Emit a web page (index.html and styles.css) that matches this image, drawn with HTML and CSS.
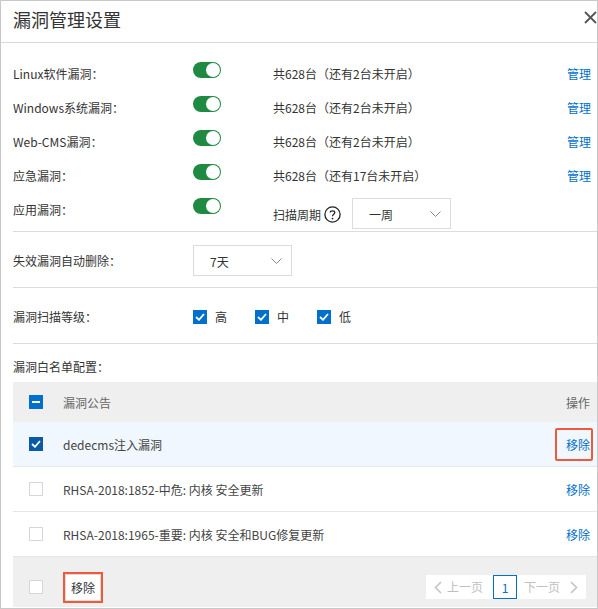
FILE: index.html
```html
<!DOCTYPE html>
<html lang="zh-CN">
<head>
<meta charset="utf-8">
<title>漏洞管理设置</title>
<link rel="stylesheet" href="styles.css">
</head>
<body>
<div class="dialog">
  <div class="header">
    <div class="title">漏洞管理设置</div>
    <svg class="close" width="13" height="13" viewBox="0 0 13 13"><path d="M1 1 L12 12 M12 1 L1 12" stroke="#555" stroke-width="1.8" fill="none"/></svg>
  </div>

  <div class="section sec-switch">
    <div class="row">
      <div class="label">Linux软件漏洞：</div>
      <div class="toggle-cell"><span class="toggle"><span class="knob"></span></span></div>
      <div class="info">共628台（还有2台未开启）</div>
      <a class="link">管理</a>
    </div>
    <div class="row">
      <div class="label">Windows系统漏洞：</div>
      <div class="toggle-cell"><span class="toggle"><span class="knob"></span></span></div>
      <div class="info">共628台（还有2台未开启）</div>
      <a class="link">管理</a>
    </div>
    <div class="row">
      <div class="label">Web-CMS漏洞：</div>
      <div class="toggle-cell"><span class="toggle"><span class="knob"></span></span></div>
      <div class="info">共628台（还有2台未开启）</div>
      <a class="link">管理</a>
    </div>
    <div class="row">
      <div class="label">应急漏洞：</div>
      <div class="toggle-cell"><span class="toggle"><span class="knob"></span></span></div>
      <div class="info">共628台（还有17台未开启）</div>
      <a class="link">管理</a>
    </div>
    <div class="row row-last">
      <div class="label">应用漏洞：</div>
      <div class="toggle-cell"><span class="toggle"><span class="knob"></span></span></div>
      <div class="period">
        <span class="period-text">扫描周期</span>
        <svg class="help" width="17" height="17" viewBox="0 0 17 17"><circle cx="8.5" cy="8.5" r="7.6" fill="none" stroke="#222" stroke-width="1.3"/><path d="M6.2 6.6 C6.2 4.2 10.8 4.2 10.8 6.6 C10.8 8.2 8.5 8.3 8.5 10.2" fill="none" stroke="#222" stroke-width="1.3"/><circle cx="8.5" cy="12.6" r="0.9" fill="#222"/></svg>
        <div class="select"><span>一周</span><svg width="11" height="6" viewBox="0 0 11 6"><path d="M0.5 0.5 L5.5 5.5 L10.5 0.5" fill="none" stroke="#888" stroke-width="1"/></svg></div>
      </div>
    </div>
  </div>

  <div class="section sec-delete">
    <div class="label">失效漏洞自动删除：</div>
    <div class="select"><span>7天</span><svg width="11" height="6" viewBox="0 0 11 6"><path d="M0.5 0.5 L5.5 5.5 L10.5 0.5" fill="none" stroke="#888" stroke-width="1"/></svg></div>
  </div>

  <div class="section sec-level">
    <div class="label">漏洞扫描等级：</div>
    <div class="levels">
      <label class="level"><span class="cb cb-on"><svg width="10" height="8" viewBox="0 0 10 8"><path d="M1 4 L4 6.8 L9 1" fill="none" stroke="#fff" stroke-width="1.8"/></svg></span>高</label>
      <label class="level"><span class="cb cb-on"><svg width="10" height="8" viewBox="0 0 10 8"><path d="M1 4 L4 6.8 L9 1" fill="none" stroke="#fff" stroke-width="1.8"/></svg></span>中</label>
      <label class="level"><span class="cb cb-on"><svg width="10" height="8" viewBox="0 0 10 8"><path d="M1 4 L4 6.8 L9 1" fill="none" stroke="#fff" stroke-width="1.8"/></svg></span>低</label>
    </div>
  </div>

  <div class="sec-white">
    <div class="white-label">漏洞白名单配置：</div>
    <div class="table">
      <div class="tr thead">
        <div class="c-check"><span class="cb cb-on"><span class="dash"></span></span></div>
        <div class="c-name">漏洞公告</div>
        <div class="c-op">操作</div>
      </div>
      <div class="tr selected">
        <div class="c-check"><span class="cb cb-dark"><svg width="10" height="8" viewBox="0 0 10 8"><path d="M1 4 L4 6.8 L9 1" fill="none" stroke="#fff" stroke-width="1.8"/></svg></span></div>
        <div class="c-name">dedecms注入漏洞</div>
        <div class="c-op"><a class="link hl">移除</a></div>
      </div>
      <div class="tr">
        <div class="c-check"><span class="cb cb-off"></span></div>
        <div class="c-name">RHSA-2018:1852-中危: 内核 安全更新</div>
        <div class="c-op"><a class="link">移除</a></div>
      </div>
      <div class="tr">
        <div class="c-check"><span class="cb cb-off"></span></div>
        <div class="c-name">RHSA-2018:1965-重要: 内核 安全和BUG修复更新</div>
        <div class="c-op"><a class="link">移除</a></div>
      </div>
      <div class="tfoot">
        <div class="c-check foot-check"><span class="cb cb-off"></span></div>
        <button class="btn">移除</button>
        <div class="pager">
          <svg class="chev" width="8" height="13" viewBox="0 0 8 13"><path d="M7 1 L1.5 6.5 L7 12" fill="none" stroke="#c4c4c4" stroke-width="1.6"/></svg>
          <span class="pg-text prev">上一页</span>
          <span class="pg-num">1</span>
          <span class="pg-text next">下一页</span>
          <svg class="chev" width="8" height="13" viewBox="0 0 8 13"><path d="M1 1 L6.5 6.5 L1 12" fill="none" stroke="#c4c4c4" stroke-width="1.6"/></svg>
        </div>
      </div>
    </div>
  </div>
</div>
</body>
</html>
```

FILE: styles.css
```css
* { box-sizing: border-box; }
html, body { margin: 0; padding: 0; background: #fff; }
body {
  font-family: "Noto Sans CJK SC", "Noto Sans", sans-serif;
  font-size: 12px;
  color: #333;
}
.dialog {
  width: 598px;
  height: 609px;
  border: 1px solid #c8c8c8;
  overflow: hidden;
  background: #fff;
}
.header {
  height: 42px;
  border-bottom: 1px solid #d9d9d9;
  display: flex;
  align-items: flex-start;
  justify-content: space-between;
  padding-left: 12px;
}
.title {
  font-size: 18px;
  line-height: 36px;
  color: #333;
}
.close { margin-top: 10px; margin-right: 0; }

.section {
  margin-left: 12px;
  border-bottom: 1px solid #dcdcdc;
}
.sec-switch { padding-top: 13px; }
.row {
  display: flex;
  align-items: flex-start;
  height: 34px;
  padding-right: 6px;
}
.row-last { height: 39px; }
.label {
  width: 180px;
  line-height: 35px;
  color: #333;
  white-space: nowrap;
}
.toggle-cell { width: 80px; padding-top: 6px; }
.toggle {
  display: block;
  width: 28px;
  height: 16px;
  border-radius: 8px;
  background: #1f8a41;
  position: relative;
}
.knob {
  position: absolute;
  right: 1px;
  top: 1px;
  width: 14px;
  height: 14px;
  border-radius: 50%;
  background: #fff;
}
.info { flex: 1; line-height: 35px; color: #333; }
.link { color: #0070cc; line-height: 35px; cursor: pointer; }

.period { display: flex; align-items: center; margin-top: 6px; height: 31px; }
.period-text { line-height: 31px; padding-top: 2px; }
.help { margin-left: 3px; margin-top: 1px; }
.period .select { margin-left: 11px; }

.select {
  width: 99px;
  height: 31px;
  border: 1px solid #dcdcdc;
  display: flex;
  align-items: center;
  justify-content: space-between;
  padding: 0 9px 0 16px;
  background: #fff;
  color: #333;
}
.select span { padding-top: 1px; }

.sec-delete {
  display: flex;
  align-items: center;
  padding: 13px 0 11px;
}
.sec-delete .label { line-height: 31px; }

.sec-level {
  display: flex;
  align-items: center;
  padding: 22px 0 19px;
  height: 56px;
}
.sec-level .label { line-height: 14px; }
.levels { display: flex; }
.level {
  display: flex;
  align-items: center;
  width: 62px;
  line-height: 14px;
}
.cb {
  display: inline-flex;
  align-items: center;
  justify-content: center;
  width: 14px;
  height: 14px;
  flex: none;
}
.level .cb { margin-right: 8px; }
.cb-on { background: #0070cc; }
.cb-dark { background: #0a5aa6; }
.cb-off { background: #fff; border: 1px solid #d6d6d6; }
.dash { width: 8px; height: 2px; background: #fff; }

.sec-white { margin-left: 12px; }
.white-label {
  padding-top: 15px;
  line-height: 16px;
  margin-bottom: 7px;
}
.table { width: 584px; }
.tr {
  display: flex;
  align-items: center;
  height: 45px;
  border-bottom: 1px solid #e6e6e6;
}
.tr.thead {
  height: 40px;
  background: #efefef;
  border-bottom: none;
  color: #666;
}
.tr.selected { background: #f0f7fe; }
.c-check { width: 50px; padding-left: 16px; display: flex; align-items: center; }
.c-name { flex: 1; color: #444; white-space: nowrap; }
.thead .c-name { color: #666; }
.c-op { padding-right: 7px; color: #666; }
.c-op .link { line-height: 17px; }
.hl {
  border: 2px solid #ef5a3b;
  border-radius: 2px;
  padding: 6px 1px 6px 9px;
  margin: 0 -3px 0 -11px;
}

.tfoot {
  height: 50px;
  background: #efefef;
  display: flex;
  align-items: flex-start;
}
.foot-check { padding-top: 23px; width: 52px; }
.btn {
  margin-top: 17px;
  height: 27px;
  padding: 0 5px;
  background: #fff;
  border: 1px solid #dcdcdc;
  outline: 2px solid #ef5a3b;
  border-radius: 0;
  font-family: "Noto Sans CJK SC", "Noto Sans", sans-serif;
  font-size: 12px;
  color: #333;
  line-height: 24px;
}
.pager {
  margin-left: auto;
  margin-right: 11px;
  margin-top: 18px;
  height: 24px;
  background: #fff;
  display: flex;
  align-items: center;
  padding: 0 8px;
}
.pg-text { color: #c0c0c0; line-height: 24px; }
.prev { margin-left: 5px; margin-right: 10px; }
.next { margin-left: 7px; margin-right: 10px; }
.pg-num {
  width: 24px;
  height: 24px;
  border: 1px solid #0070cc;
  color: #0070cc;
  display: flex;
  align-items: center;
  justify-content: center;
}
```
